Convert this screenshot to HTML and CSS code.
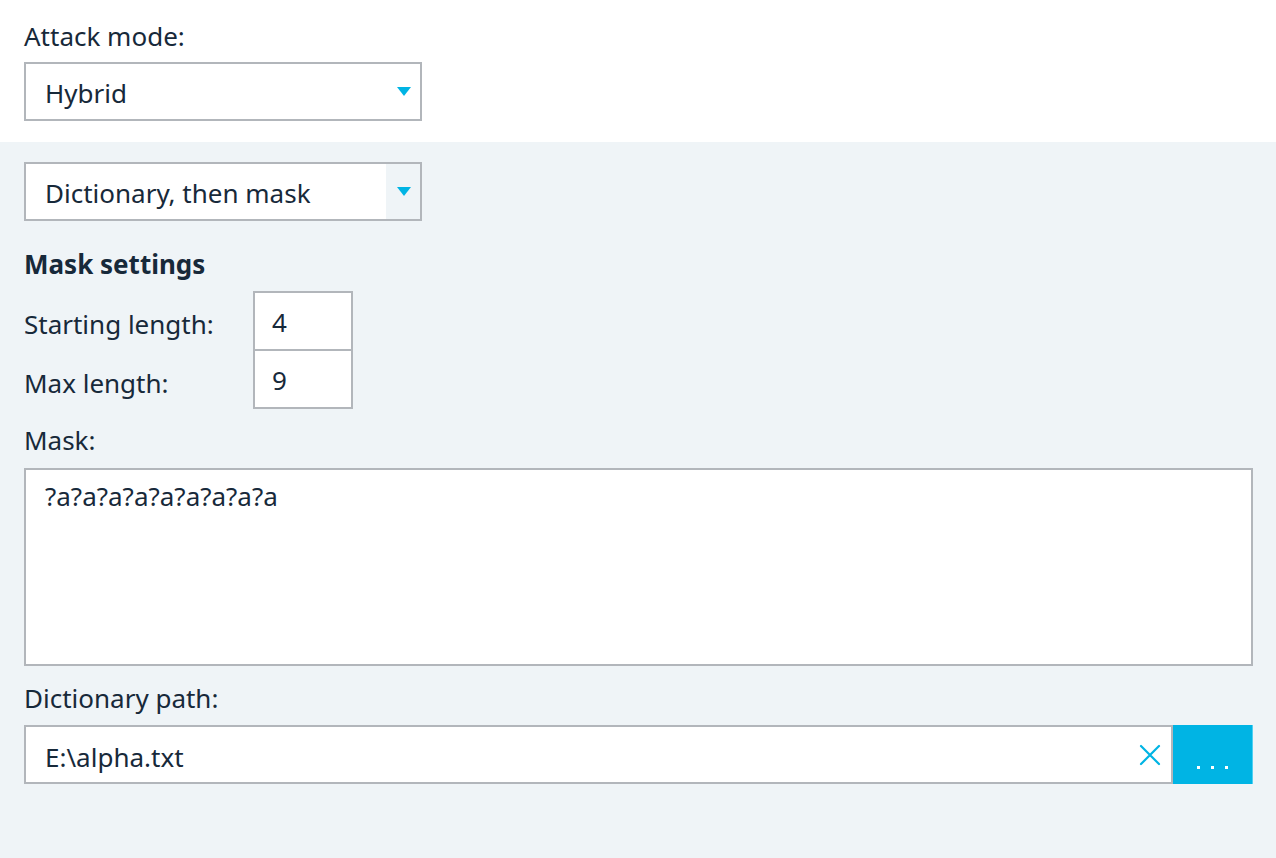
FILE: index.html
```html
<!DOCTYPE html>
<html>
<head>
<meta charset="utf-8">
<link rel="stylesheet" href="styles.css">
</head>
<body>
<div class="top">
  <div class="label">Attack mode:</div>
  <div class="select">
    <span class="value">Hybrid</span>
    <span class="drop"><span class="arrow"></span></span>
  </div>
</div>
<div class="panel">
  <div class="select sub">
    <span class="value">Dictionary, then mask</span>
    <span class="drop"><span class="arrow"></span></span>
  </div>
  <div class="heading">Mask settings</div>
  <div class="lengths">
    <div class="row-label">Starting length:</div>
    <div class="num first">4</div>
    <div class="row-label">Max length:</div>
    <div class="num second">9</div>
  </div>
  <div class="label mask-label">Mask:</div>
  <div class="textarea">?a?a?a?a?a?a?a?a?a</div>
  <div class="label path-label">Dictionary path:</div>
  <div class="pathrow">
    <div class="pathinput">
      <span class="value">E:\alpha.txt</span>
      <svg class="clear" width="22" height="22" viewBox="0 0 22 22"><path d="M2 2 L20 20 M20 2 L2 20" stroke="#00b4e4" stroke-width="2.2" fill="none" stroke-linecap="round"/></svg>
    </div>
    <div class="browse"><span class="dot"></span><span class="dot"></span><span class="dot"></span></div>
  </div>
</div>
</body>
</html>
```
FILE: styles.css
```css
* { box-sizing: border-box; }
html, body { margin: 0; padding: 0; }
body {
  font-family: "Noto Sans", "Open Sans", sans-serif;
  font-size: 26px;
  color: #17293a;
  background: #eff4f7;
  width: 1276px;
  height: 858px;
  overflow: hidden;
}
.top {
  background: #ffffff;
  height: 142px;
  padding: 20px 23px 0 24px;
}
.label {
  height: 32px;
  line-height: 32px;
  margin-bottom: 10px;
}
.select {
  width: 398px;
  height: 59px;
  border: 2px solid #b2b6bb;
  background: #ffffff;
  display: flex;
  align-items: stretch;
}
.select .value {
  flex: 1;
  padding-left: 19px;
  padding-top: 3px;
  line-height: 52px;
}
.drop {
  width: 34px;
  display: flex;
  align-items: center;
  justify-content: center;
}
.select.sub .drop { background: #eff4f7; }
.arrow {
  width: 0;
  height: 0;
  border-left: 7.5px solid transparent;
  border-right: 7.5px solid transparent;
  border-top: 9px solid #00b4e4;
  margin-left: 2px;
}
.panel {
  padding: 20px 23px 0 24px;
}
.heading {
  font-weight: 700;
  height: 32px;
  line-height: 32px;
  margin-top: 27px;
}
.lengths {
  margin-top: 11px;
  display: grid;
  grid-template-columns: 229px 100px;
  align-items: center;
}
.row-label { line-height: 32px; padding-top: 5px; }
.num {
  border: 2px solid #b2b6bb;
  background: #ffffff;
  padding-left: 17px;
  padding-top: 3px;
}
.num.first { height: 60px; line-height: 53px; }
.num.second { height: 58px; line-height: 53px; border-top: 0; }
.mask-label { margin-top: 15px; margin-bottom: 12px; }
.textarea {
  height: 198px;
  border: 2px solid #b2b6bb;
  background: #ffffff;
  padding: 10px 19px;
  line-height: 32px;
}
.path-label { margin-top: 16px; margin-bottom: 11px; }
.pathrow {
  display: flex;
  height: 59px;
}
.pathinput {
  flex: 1;
  border: 2px solid #b2b6bb;
  background: #ffffff;
  display: flex;
  align-items: center;
  padding-left: 19px;
  padding-right: 10px;
}
.pathinput .value { flex: 1; padding-top: 4px; }
.clear { display: block; }
.browse {
  width: 80px;
  background: #00b4e4;
  border-right: 1px solid #4fd0f2;
  display: flex;
  justify-content: center;
  align-items: center;
  gap: 11px;
  padding-top: 25px;
}
.dot {
  width: 3px;
  height: 3px;
  background: #ffffff;
}
```
